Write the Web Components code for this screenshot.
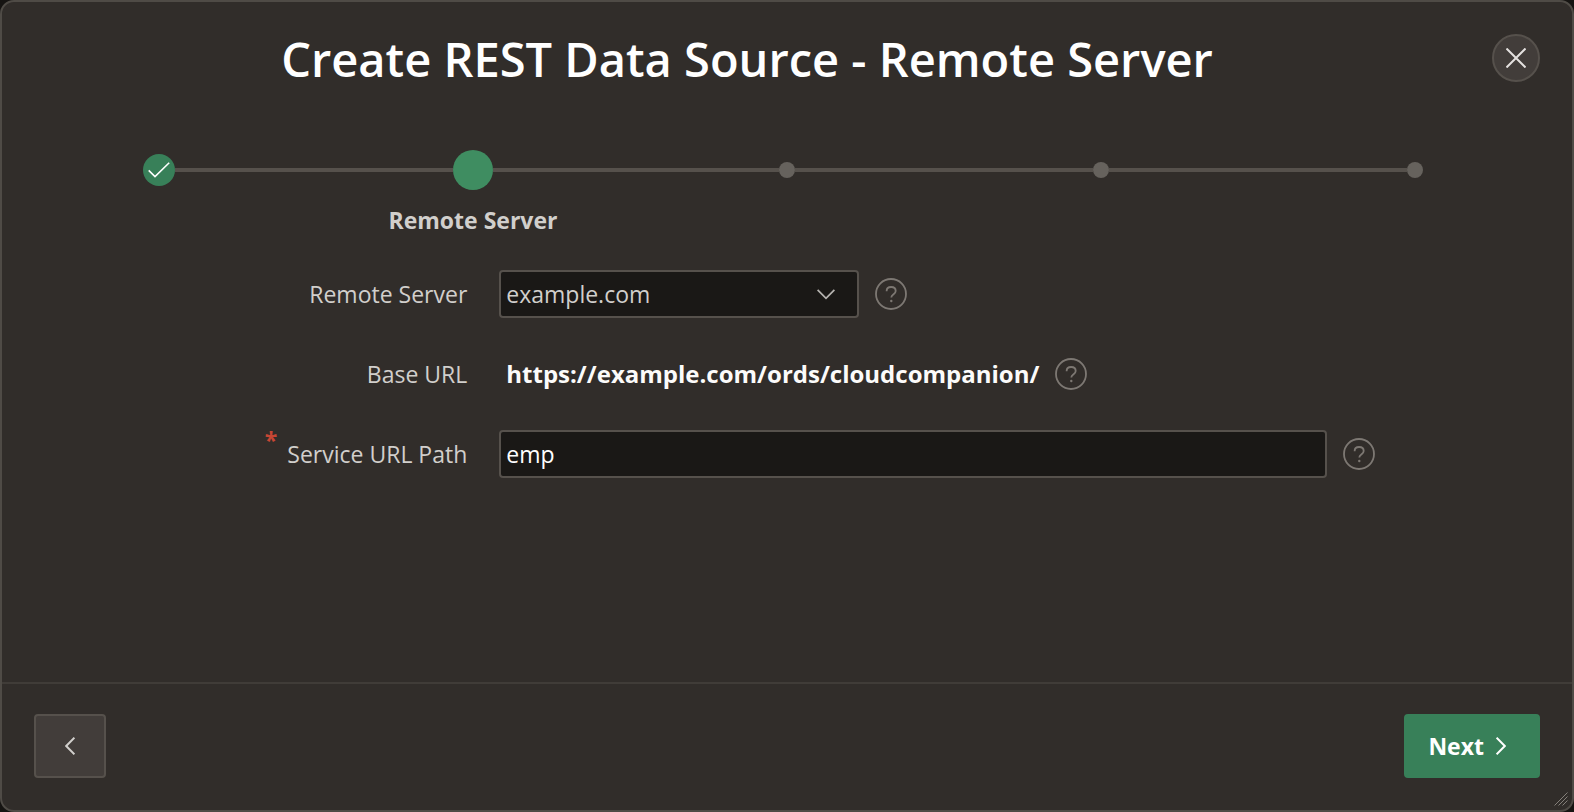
<!DOCTYPE html>
<html lang="en">
<head>
<meta charset="utf-8">
<title>Create REST Data Source</title>
<style>
  html, body {
    height: 100%;
    margin: 0;
  }
  body {
    --surface: #312d2a;
    --raised: #423d3a;
    --field: #1a1816;
    --line: #56514c;
    --muted: #7d7873;
    --text: #d1cfcc;
    --bright: #fcfbfa;
    --green: #388059;
    background: #161412;
    color: var(--text);
    font: 23px/32px "Open Sans", "Noto Sans", sans-serif;
  }
</style>
</head>
<body>
<wizard-dialog heading="Create REST Data Source - Remote Server">
  <wizard-progress slot="progress" total="5" current="2" label="Remote Server"></wizard-progress>
  <select-field label="Remote Server" options="example.com"></select-field>
  <display-field label="Base URL" value="https://example.com/ords/cloudcompanion/"></display-field>
  <text-field label="Service URL Path" value="emp" required></text-field>
  <wizard-button slot="footer" label="Previous" icon="left"></wizard-button>
  <wizard-button slot="footer" label="Next" icon="right" hot></wizard-button>
</wizard-dialog>

<script>
(function() {
    class WizardDialog extends HTMLElement {
        constructor() {
            super();
            this.attachShadow({mode: 'open'});
            this.shadowRoot.innerHTML = `
                <style>
                  :host {
                    box-sizing: border-box;
                    display: flex;
                    flex-direction: column;
                    position: relative;
                    min-height: 100%;
                    border: 2px solid #4f4b46;
                    border-radius: 14px;
                    background: var(--surface);
                  }
                  header {
                    display: flex;
                    align-items: center;
                    gap: 32px;
                    padding: 23px 32px;
                  }
                  h1 {
                    flex: 1;
                    margin: 0;
                    padding-top: 2px;
                    color: #fff;
                    font-size: 47px;
                    font-weight: 600;
                    line-height: 64px;
                    text-align: center;
                  }
                  .close {
                    display: grid;
                    place-items: center;
                    width: 48px;
                    height: 48px;
                    padding: 0;
                    border: 2px solid var(--line);
                    border-radius: 50%;
                    background: var(--raised);
                    color: #e4e1df;
                    cursor: pointer;
                  }
                  main {
                    flex: 1;
                    display: flex;
                    flex-direction: column;
                    gap: 32px;
                    padding: 34px 0;
                  }
                  footer {
                    display: flex;
                    justify-content: space-between;
                    padding: 30px 32px 32px;
                    border-top: 2px solid #403c38;
                  }
                  .grip {
                    position: absolute;
                    right: 4px;
                    bottom: 4px;
                    color: #85807a;
                  }
                </style>
                <header>
                  <h1></h1>
                  <button class="close" type="button" aria-label="Close">
                    <svg width="20" height="20" viewBox="0 0 20 20" fill="none" stroke="currentColor" stroke-width="2"><path d="M0.5 0.5 19.5 19.5M19.5 0.5 0.5 19.5"/></svg>
                  </button>
                </header>
                <slot name="progress"></slot>
                <main><slot></slot></main>
                <footer><slot name="footer"></slot></footer>
                <svg class="grip" width="14" height="14" viewBox="0 0 14 14" fill="none" stroke="currentColor"><path d="M0.5 13.5 13.5 0.5M4.5 13.5 13.5 4.5M8.5 13.5 13.5 8.5"/></svg>
            `;
        }

        connectedCallback() {
            this.setAttribute('role', 'dialog');
            this.shadowRoot.querySelector('h1').textContent = this.getAttribute('heading');
        }
    }
    window.customElements.define('wizard-dialog', WizardDialog);

    class WizardProgress extends HTMLElement {
        constructor() {
            super();
            this.attachShadow({mode: 'open'});
        }

        connectedCallback() {
            const total = Number(this.getAttribute('total'));
            const current = Number(this.getAttribute('current'));
            const check = '<svg width="22" height="16" viewBox="0 0 22 16" fill="none" stroke="#fff" stroke-width="1.6"><path d="M0.7 8.4 7 14.6 21.2 0.8"/></svg>';
            let steps = '';
            for (let i = 1; i <= total; i++) {
                const state = i < current ? 'done' : i === current ? 'current' : 'todo';
                steps += `
                  <li class="${state}"${i === current ? ' aria-current="step"' : ''}>
                    <span class="track"><i></i><b>${i < current ? check : ''}</b><i></i></span>
                    ${i === current ? `<span class="label">${this.getAttribute('label')}</span>` : ''}
                  </li>`;
            }
            this.shadowRoot.innerHTML = `
                <style>
                  :host {
                    display: block;
                    padding-top: 36px;
                  }
                  ol {
                    display: flex;
                    margin: 0;
                    padding: 0;
                    list-style: none;
                  }
                  li {
                    flex: 1;
                    text-align: center;
                  }
                  .track {
                    display: flex;
                    align-items: center;
                    height: 40px;
                  }
                  i {
                    flex: 1;
                    height: 4px;
                    background: #56514c;
                  }
                  li:first-child i:first-child,
                  li:last-child i:last-child {
                    background: none;
                  }
                  b {
                    display: grid;
                    place-items: center;
                    width: 16px;
                    height: 16px;
                    border-radius: 50%;
                    background: #66625d;
                  }
                  .done b {
                    width: 32px;
                    height: 32px;
                    background: var(--green);
                  }
                  .current b {
                    width: 40px;
                    height: 40px;
                    background: #3f8d61;
                  }
                  .label {
                    display: block;
                    padding-top: 14px;
                    font-weight: 700;
                  }
                </style>
                <ol>${steps}</ol>
            `;
        }
    }
    window.customElements.define('wizard-progress', WizardProgress);

    // Shared row: label, control, help button
    class BaseField extends HTMLElement {
        constructor() {
            super();
            this.attachShadow({mode: 'open'});
        }

        connectedCallback() {
            const label = this.getAttribute('label');
            const mark = this.hasAttribute('required') ? '<span class="mark" aria-hidden="true">*</span>' : '';
            this.shadowRoot.innerHTML = `
                <style>
                  :host {
                    display: grid;
                    grid-template-columns: minmax(240px, 93fr) minmax(0, 175fr) minmax(0, 33fr);
                    column-gap: 32px;
                  }
                  label {
                    display: flex;
                    justify-content: flex-end;
                    align-items: center;
                    gap: 10px;
                    height: 48px;
                  }
                  .mark {
                    align-self: flex-start;
                    color: #c74634;
                    font-weight: 700;
                    line-height: 20px;
                  }
                  .row {
                    display: flex;
                    align-items: center;
                    gap: 16px;
                  }
                  input, select {
                    box-sizing: border-box;
                    height: 48px;
                    margin: 0;
                    padding: 0 5px;
                    border: 2px solid var(--line);
                    border-radius: 4px;
                    background: var(--field);
                    color: inherit;
                    font: inherit;
                  }
                  input {
                    flex: 1;
                    min-width: 0;
                    color: #fff;
                  }
                  .select {
                    display: grid;
                    width: 360px;
                    align-items: center;
                  }
                  .select > * {
                    grid-area: 1 / 1;
                  }
                  .select svg {
                    justify-self: end;
                    margin-right: 24px;
                    color: #b5b2af;
                    pointer-events: none;
                  }
                  select {
                    width: 100%;
                    appearance: none;
                  }
                  output {
                    padding-left: 7px;
                    color: var(--bright);
                    font-size: 24px;
                    font-weight: 700;
                  }
                  button {
                    flex: none;
                    width: 32px;
                    height: 32px;
                    padding: 0;
                    border: 0;
                    background: none;
                    color: var(--muted);
                    cursor: pointer;
                  }
                  button svg {
                    display: block;
                  }
                </style>
                <label for="control">${mark}<span>${label}</span></label>
                <div class="row">
                  ${this.control()}
                  <button type="button" aria-label="Help: ${label}">
                    <svg width="32" height="32" viewBox="0 0 32 32" fill="none" stroke="currentColor" stroke-width="1.8">
                      <circle cx="16" cy="16" r="15"/>
                      <path d="M11.6 13.2C11.6 10.5 13.4 9 16.1 9 18.8 9 20.7 10.6 20.7 13 20.7 16.3 16.3 16.1 16.3 19.6"/>
                      <circle cx="16.3" cy="23" r="1.2" fill="currentColor" stroke="none"/>
                    </svg>
                  </button>
                </div>
            `;
        }
    }

    class TextField extends BaseField {
        control() {
            const required = this.hasAttribute('required') ? 'required' : '';
            return `<input id="control" type="text" value="${this.getAttribute('value')}" ${required}>`;
        }
    }
    window.customElements.define('text-field', TextField);

    class SelectField extends BaseField {
        control() {
            const options = this.getAttribute('options').split(',').map(name => `<option>${name}</option>`).join('');
            return `
              <div class="select">
                <select id="control">${options}</select>
                <svg width="18" height="11" viewBox="0 0 18 11" fill="none" stroke="currentColor" stroke-width="1.8"><path d="M0.6 0.9 9 9.3 17.4 0.9"/></svg>
              </div>`;
        }
    }
    window.customElements.define('select-field', SelectField);

    class DisplayField extends BaseField {
        control() {
            return `<output id="control">${this.getAttribute('value')}</output>`;
        }
    }
    window.customElements.define('display-field', DisplayField);

    class WizardButton extends HTMLElement {
        constructor() {
            super();
            this.attachShadow({mode: 'open'});
        }

        connectedCallback() {
            const label = this.getAttribute('label');
            const hot = this.hasAttribute('hot');
            const path = this.getAttribute('icon') === 'left' ? 'M9.4 0.7 1.2 9 9.4 17.3' : 'M0.6 0.7 8.8 9 0.6 17.3';
            this.shadowRoot.innerHTML = `
                <style>
                  :host {
                    display: block;
                  }
                  button {
                    display: flex;
                    align-items: center;
                    justify-content: center;
                    gap: 12px;
                    min-width: 72px;
                    height: 64px;
                    padding: 0 22px;
                    border: 2px solid var(--line);
                    border-radius: 4px;
                    background: var(--raised);
                    color: var(--text);
                    font: inherit;
                    font-weight: 700;
                    cursor: pointer;
                  }
                  :host([hot]) button {
                    padding-right: 32px;
                    border-color: var(--green);
                    background: var(--green);
                    color: #fff;
                  }
                </style>
                <button type="button" ${hot ? '' : `aria-label="${label}"`}>
                  ${hot ? `<span>${label}</span>` : ''}
                  <svg width="10" height="18" viewBox="0 0 10 18" fill="none" stroke="currentColor" stroke-width="2"><path d="${path}"/></svg>
                </button>
            `;
        }
    }
    window.customElements.define('wizard-button', WizardButton);
})();
</script>
</body>
</html>
